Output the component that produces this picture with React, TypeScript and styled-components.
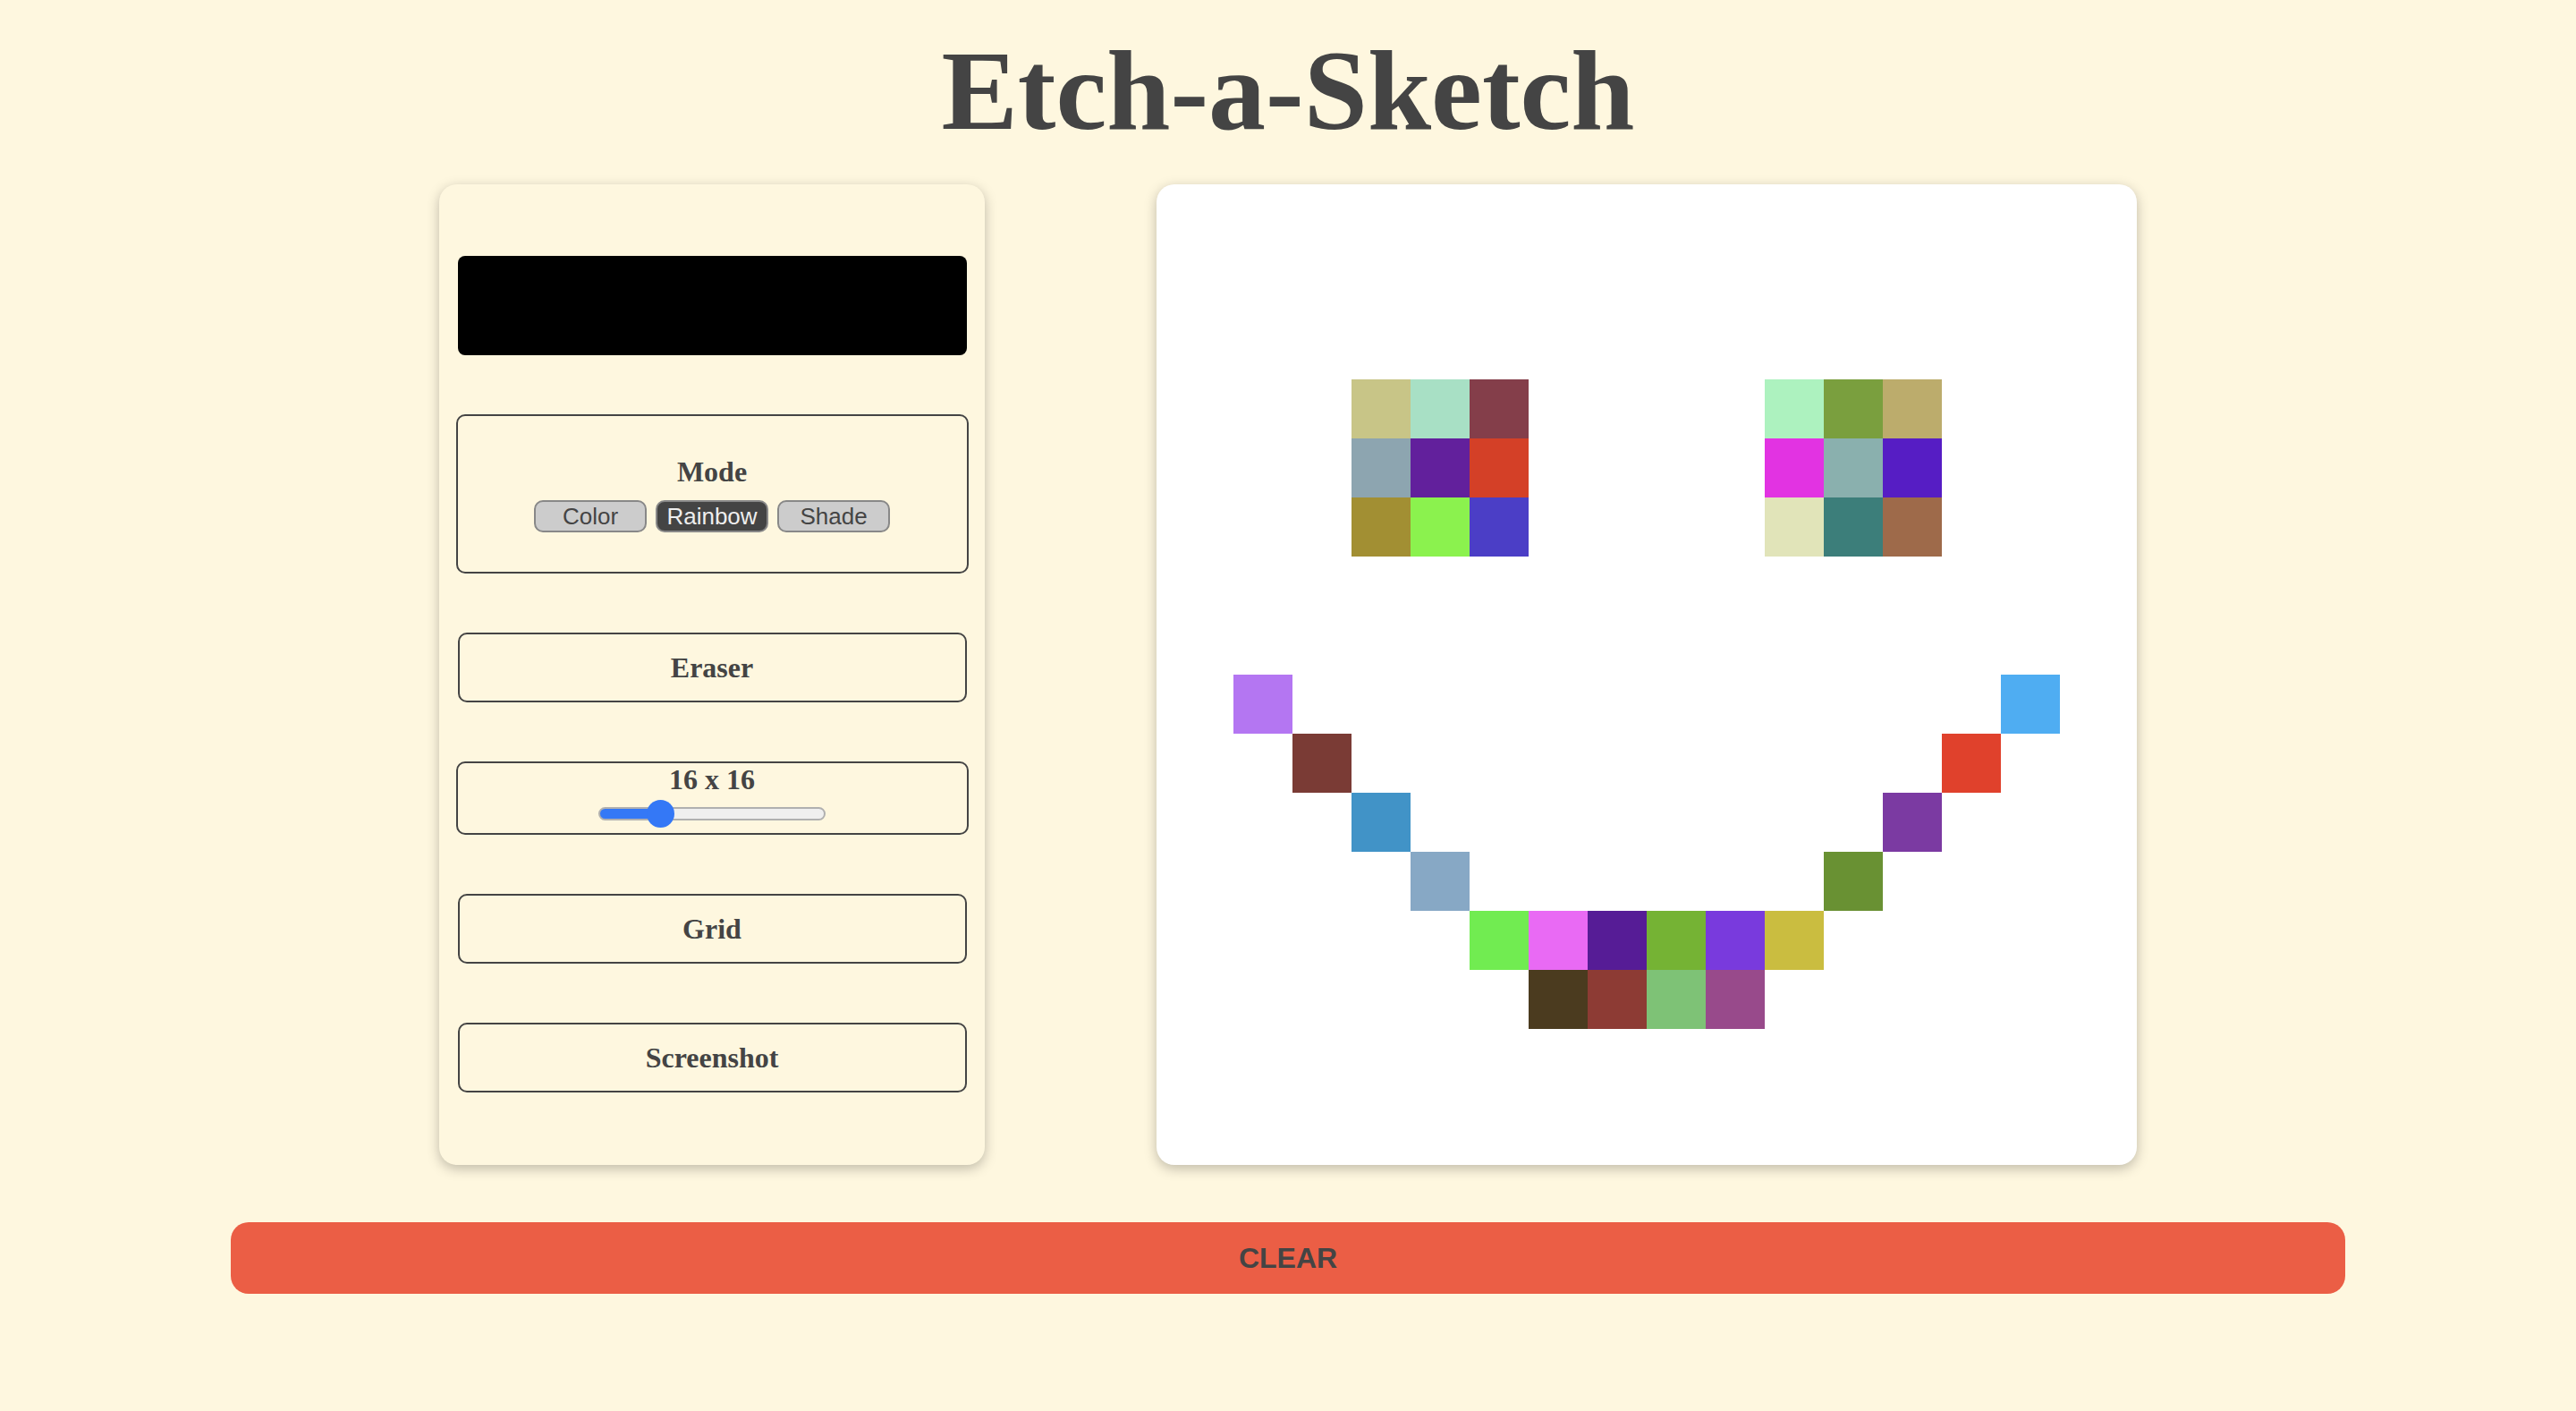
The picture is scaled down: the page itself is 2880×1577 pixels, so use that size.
import React from "react";
import styled, { createGlobalStyle } from "styled-components";

const GlobalStyle = createGlobalStyle`
  html, body {
    margin: 0;
    padding: 0;
    background: #fef7df;
  }
  body {
    font-family: "Liberation Serif", "Times New Roman", serif;
    color: #444;
  }
`;

const Page = styled.div`
  display: flex;
  flex-direction: column;
  align-items: center;
  padding-top: 30px;
  min-height: 1577px;
  box-sizing: border-box;
`;

const Title = styled.h1`
  margin: 0;
  font-family: "Liberation Serif", "Times New Roman", serif;
  font-weight: 700;
  font-size: 128px;
  line-height: 142px;
  color: #444;
`;

const Main = styled.div`
  display: flex;
  gap: 192px;
  margin-top: 34px;
`;

const Panel = styled.div`
  box-sizing: border-box;
  width: 610px;
  height: 1096px;
  padding: 80px 0 81px;
  border-radius: 20px;
  background: #fef7df;
  box-shadow: 0 4px 14px rgba(0, 0, 0, 0.25);
  display: flex;
  flex-direction: column;
  align-items: center;
  gap: 66px;
`;

const Swatch = styled.div`
  width: 569px;
  height: 111px;
  border-radius: 8px;
  background: #000;
  flex-shrink: 0;
`;

const Box = styled.div<{ $height: number }>`
  box-sizing: border-box;
  width: 573px;
  height: ${(p) => p.$height}px;
  border: 2px solid #444;
  border-radius: 10px;
  display: flex;
  flex-direction: column;
  align-items: center;
  flex-shrink: 0;
`;

const ModeBox = styled(Box)`
  justify-content: center;
  gap: 13px;
`;

const Label = styled.div`
  font-family: "Liberation Serif", "Times New Roman", serif;
  font-weight: 700;
  font-size: 32px;
  line-height: 37px;
  color: #444;
`;

const ModeRow = styled.div`
  display: flex;
  gap: 10px;
`;

const ModeButton = styled.button<{ $active?: boolean }>`
  box-sizing: border-box;
  width: 126px;
  height: 36px;
  padding: 0;
  border: 2px solid #888;
  border-radius: 10px;
  background: ${(p) => (p.$active ? "#444" : "#ccc")};
  color: ${(p) => (p.$active ? "#eee" : "#444")};
  font-family: "Liberation Sans", Arial, sans-serif;
  font-size: 26px;
  line-height: 32px;
`;

const ToolButton = styled.button`
  box-sizing: border-box;
  width: 569px;
  height: 78px;
  flex-shrink: 0;
  border: 2px solid #444;
  border-radius: 10px;
  background: transparent;
  color: #444;
  font-family: "Liberation Serif", "Times New Roman", serif;
  font-weight: 700;
  font-size: 32px;
  padding: 0;
`;

const SliderRow = styled.div`
  height: 38px;
  display: flex;
  align-items: center;
`;

const Range = styled.input<{ $fill: number }>`
  -webkit-appearance: none;
  appearance: none;
  width: 254px;
  height: 15px;
  margin: 0;
  border-radius: 8px;
  box-sizing: border-box;
  border: 2px solid #b0b0b0;
  background: linear-gradient(
    to right,
    #3478f6 0%,
    #3478f6 ${(p) => p.$fill}%,
    #efefef ${(p) => p.$fill}%,
    #efefef 100%
  );
  outline: none;
  &::-webkit-slider-thumb {
    -webkit-appearance: none;
    appearance: none;
    width: 31px;
    height: 31px;
    border-radius: 50%;
    background: #3478f6;
    border: none;
  }
`;

const Canvas = styled.div`
  box-sizing: border-box;
  width: 1096px;
  height: 1096px;
  padding: 20px;
  border-radius: 20px;
  background: #fff;
  box-shadow: 0 4px 14px rgba(0, 0, 0, 0.25);
`;

const Grid = styled.div`
  display: grid;
  grid-template-columns: repeat(16, 66px);
  grid-template-rows: repeat(16, 66px);
`;

const Cell = styled.div<{ $color: string }>`
  background: ${(p) => p.$color};
`;

const ClearButton = styled.button`
  width: 2364px;
  height: 80px;
  margin-top: 64px;
  border: none;
  border-radius: 20px;
  background: #eb5e45;
  color: #444;
  font-family: "Liberation Sans", Arial, sans-serif;
  font-weight: 700;
  font-size: 32px;
  text-transform: uppercase;
`;

const painted: Record<string, string> = {
  "3,3": "#c8c587",
  "3,4": "#a8e0c5",
  "3,5": "#843e4a",
  "4,3": "#8da5b0",
  "4,4": "#62209c",
  "4,5": "#d44027",
  "5,3": "#a28f33",
  "5,4": "#8bf24e",
  "5,5": "#4b3ec6",
  "3,10": "#adf2bf",
  "3,11": "#7a9f3e",
  "3,12": "#bcac6c",
  "4,10": "#e233e2",
  "4,11": "#8ab0ae",
  "4,12": "#561dc4",
  "5,10": "#e1e4b9",
  "5,11": "#3c7e7a",
  "5,12": "#9e6a4a",
  "8,1": "#b476f2",
  "8,14": "#4fadf2",
  "9,2": "#7a3b35",
  "9,13": "#e0412c",
  "10,3": "#4193c7",
  "10,12": "#7b3aa2",
  "11,4": "#87a8c5",
  "11,11": "#699133",
  "12,5": "#71ec51",
  "12,6": "#e96af4",
  "12,7": "#561c96",
  "12,8": "#75b334",
  "12,9": "#793add",
  "12,10": "#cabd40",
  "13,6": "#4b3b1f",
  "13,7": "#8d3b34",
  "13,8": "#7ec276",
  "13,9": "#984a8b",
};

const size = 16;
const min = 1;
const max = 64;
const fill = ((size - min) / (max - min)) * 100;

export default function App() {
  const cells = [];
  for (let r = 0; r < 16; r++) {
    for (let c = 0; c < 16; c++) {
      cells.push(<Cell key={`${r}-${c}`} $color={painted[`${r},${c}`] ?? "#fff"} />);
    }
  }
  return (
    <>
      <GlobalStyle />
      <Page>
        <Title>Etch-a-Sketch</Title>
        <Main>
          <Panel>
            <Swatch />
            <ModeBox $height={178}>
              <Label>Mode</Label>
              <ModeRow>
                <ModeButton>Color</ModeButton>
                <ModeButton $active>Rainbow</ModeButton>
                <ModeButton>Shade</ModeButton>
              </ModeRow>
            </ModeBox>
            <ToolButton>Eraser</ToolButton>
            <Box $height={82}>
              <Label>16 x 16</Label>
              <SliderRow>
                <Range type="range" min={min} max={max} defaultValue={size} $fill={fill} />
              </SliderRow>
            </Box>
            <ToolButton>Grid</ToolButton>
            <ToolButton>Screenshot</ToolButton>
          </Panel>
          <Canvas>
            <Grid>{cells}</Grid>
          </Canvas>
        </Main>
        <ClearButton>Clear</ClearButton>
      </Page>
    </>
  );
}
